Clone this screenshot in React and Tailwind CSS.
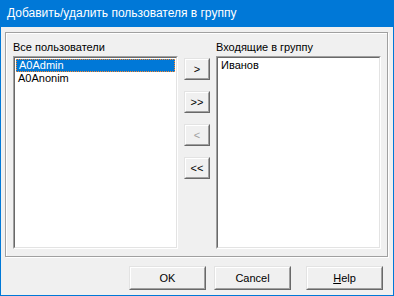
const font = { fontFamily: '"Liberation Sans", Arial, sans-serif' };

function RaisedButton({ children, className = '', disabled }) {
  return (
    <div className={`border border-t-[#e3e3e3] border-l-[#e3e3e3] border-r-[#696969] border-b-[#696969] bg-[#f0f0f0] ${className}`}>
      <div className={`h-full w-full flex items-center justify-center border border-t-white border-l-white border-r-[#a0a0a0] border-b-[#a0a0a0] text-[11px] leading-none ${disabled ? 'text-[#a0a0a0]' : 'text-black'}`}>
        {children}
      </div>
    </div>
  );
}

function ListBox({ items, selected }) {
  return (
    <div className="w-[165px] h-[193px] border border-t-[#a0a0a0] border-l-[#a0a0a0] border-r-white border-b-white">
      <div className="h-full w-full bg-white border border-t-[#696969] border-l-[#696969] border-r-[#e3e3e3] border-b-[#e3e3e3] pt-[1px] pl-[1px] pr-[1px]">
        {items.map((it, i) => (
          <div key={it}
            className={`h-[13px] flex items-center pl-[2px] text-[11px] leading-none ${i === selected ? 'bg-[#0078d7] text-white border border-dotted border-[#ff8728] pl-[1px]' : 'text-black'}`}>
            {it}
          </div>
        ))}
      </div>
    </div>
  );
}

export default function App() {
  return (
    <div style={font} className="w-[394px] h-[296px] bg-[#f0f0f0] flex flex-col border-x border-b border-[#0078d7] select-none">
      <div className="h-[27px] -mx-px bg-[#0078d7] text-white text-[12px] flex items-center pl-[7px] pb-[1px]">
        Добавить/удалить пользователя в группу
      </div>

      <div className="ml-[4px] mt-[5px] w-[383px] h-[225px] border border-[#a0a0a0] shadow-[inset_1px_1px_0_#fff,1px_1px_0_#fff] flex pl-[7px] pt-[6px]">
        <div className="flex flex-col">
          <div className="h-[17px] text-[11px] text-black leading-none pt-[3px]">Все пользователи</div>
          <ListBox items={['A0Admin', 'A0Anonim']} selected={0} />
        </div>

        <div className="ml-[6px] mt-[19px] flex flex-col gap-[11px]">
          <RaisedButton className="w-[26px] h-[22px]">&gt;</RaisedButton>
          <RaisedButton className="w-[26px] h-[22px]">&gt;&gt;</RaisedButton>
          <RaisedButton className="w-[26px] h-[22px]" disabled>&lt;</RaisedButton>
          <RaisedButton className="w-[26px] h-[22px]">&lt;&lt;</RaisedButton>
        </div>

        <div className="ml-[6px] flex flex-col">
          <div className="h-[17px] text-[11px] text-black leading-none pt-[3px]">Входящие в группу</div>
          <ListBox items={['Иванов']} selected={-1} />
        </div>
      </div>

      <div className="mt-[9px] flex pl-[128px]">
        <RaisedButton className="w-[77px] h-[24px]">OK</RaisedButton>
        <RaisedButton className="ml-[8px] w-[77px] h-[24px]">Cancel</RaisedButton>
        <RaisedButton className="ml-[15px] w-[77px] h-[24px]"><span><span className="underline">H</span>elp</span></RaisedButton>
      </div>
    </div>
  );
}
